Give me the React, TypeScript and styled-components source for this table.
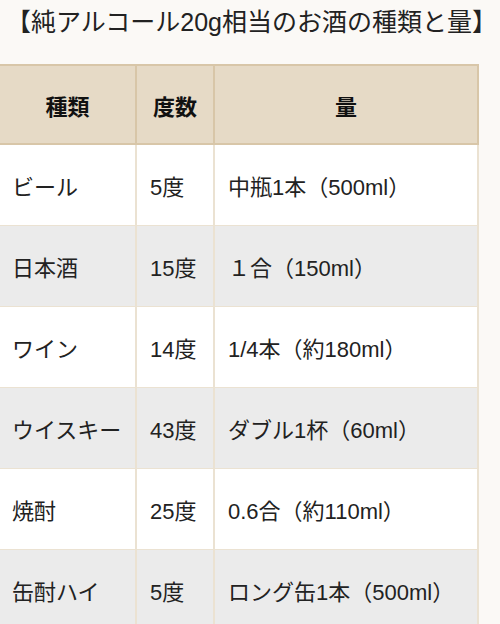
import React from 'react';
import styled, { createGlobalStyle } from 'styled-components';

const GlobalStyle = createGlobalStyle`
  html, body {
    margin: 0;
    padding: 0;
    background: #fbf9f6;
  }
  body {
    font-family: "Liberation Sans", "Noto Sans CJK JP", sans-serif;
    color: #222;
  }
`;

const Page = styled.div`
  width: 500px;
  height: 624px;
  overflow: hidden;
`;

const Title = styled.h3`
  margin: 0;
  padding: 4px 0 0 6px;
  height: 64px;
  box-sizing: border-box;
  font-size: 25px;
  font-weight: normal;
  line-height: 36px;
  white-space: nowrap;
  color: #222;
`;

const Table = styled.table`
  border-collapse: collapse;
  width: 473px;
  table-layout: fixed;
  font-size: 22px;
`;

const HeadCell = styled.th<{ $w: number }>`
  width: ${(p) => p.$w}px;
  height: 77px;
  padding: 0;
  background: #e6dac6;
  border: 2px solid #d8c6a8;
  font-weight: bold;
  text-align: center;
  color: #111;
  &:first-child {
    border-left: none;
  }
`;

const Row = styled.tr<{ $alt: boolean }>`
  background: ${(p) => (p.$alt ? '#ebebeb' : '#ffffff')};
`;

const Cell = styled.td`
  height: 80px;
  padding: 0 0 0 13px;
  border: 2px solid #ebe2d2;
  border-top-width: 1px;
  border-bottom-width: 1px;
  white-space: nowrap;
  vertical-align: middle;
  &:first-child {
    border-left: none;
    padding-left: 12px;
  }
`;

const rows = [
  ['ビール', '5度', '中瓶1本（500ml）'],
  ['日本酒', '15度', '１合（150ml）'],
  ['ワイン', '14度', '1/4本（約180ml）'],
  ['ウイスキー', '43度', 'ダブル1杯（60ml）'],
  ['焼酎', '25度', '0.6合（約110ml）'],
  ['缶酎ハイ', '5度', 'ロング缶1本（500ml）'],
];

export default function App() {
  return (
    <Page>
      <GlobalStyle />
      <Title>【純アルコール20g相当のお酒の種類と量】</Title>
      <Table>
        <thead>
          <tr>
            <HeadCell $w={135}>種類</HeadCell>
            <HeadCell $w={76}>度数</HeadCell>
            <HeadCell $w={262}>量</HeadCell>
          </tr>
        </thead>
        <tbody>
          {rows.map((r, i) => (
            <Row key={r[0]} $alt={i % 2 === 1}>
              {r.map((c) => (
                <Cell key={c}>{c}</Cell>
              ))}
            </Row>
          ))}
        </tbody>
      </Table>
    </Page>
  );
}
